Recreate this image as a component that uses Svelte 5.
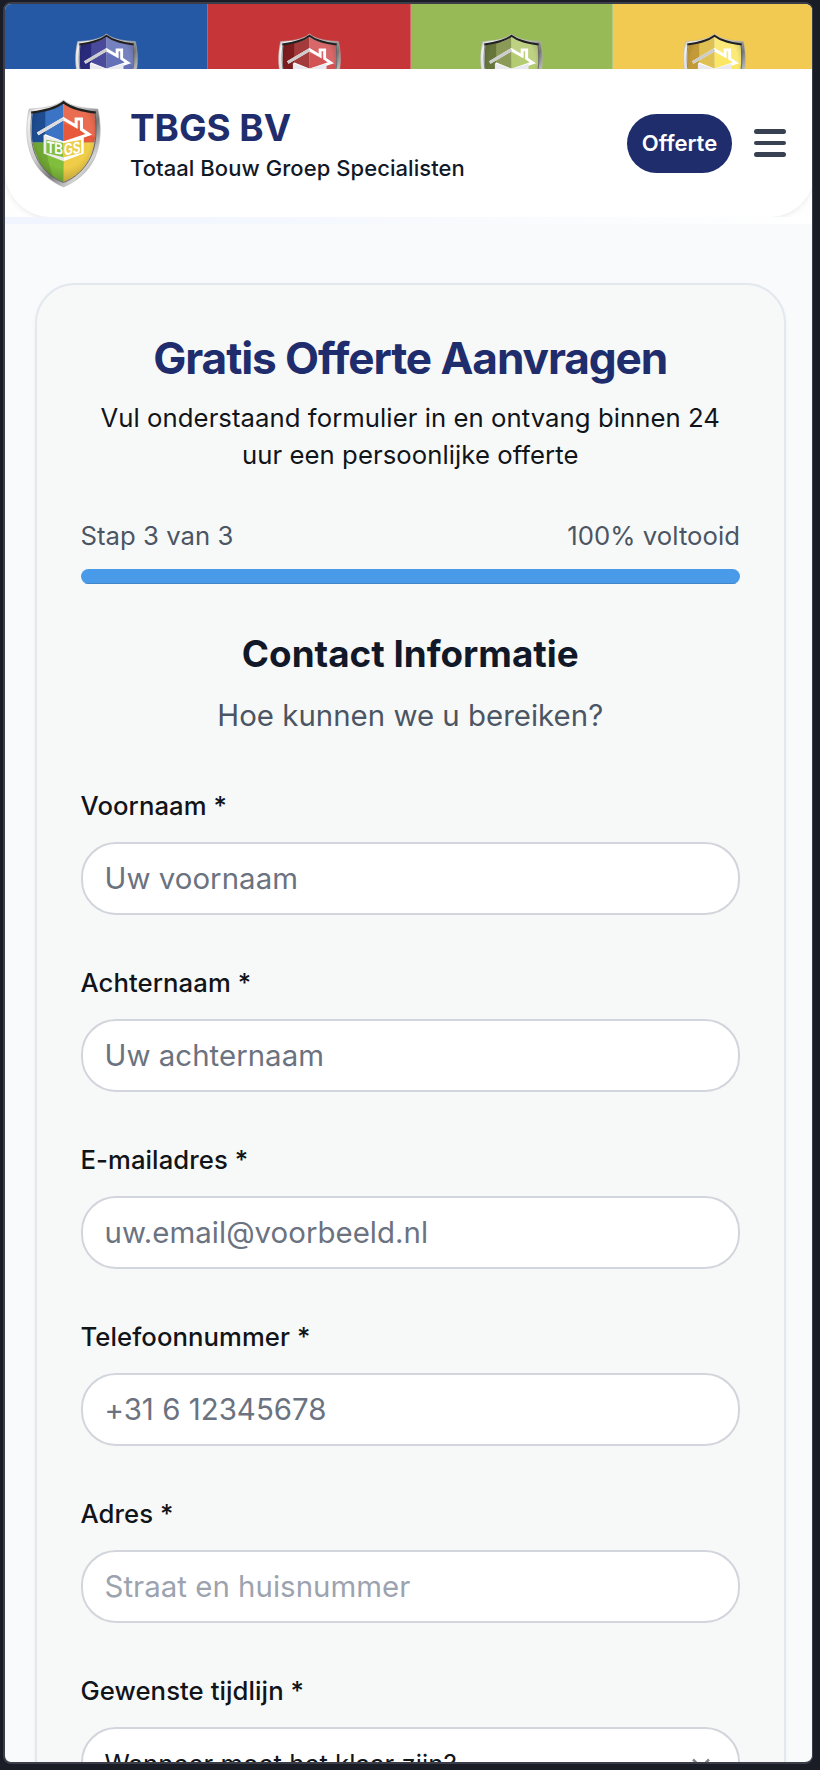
<script>
  const strips = [
    { bg: '#2558a5', dark: '#2a2a7c', mid: '#4a4a9c', light: '#6470b8' },
    { bg: '#c63639', dark: '#7d1c1e', mid: '#a33a3c', light: '#d25354' },
    { bg: '#97ba56', dark: '#66753a', mid: '#8c9a58', light: '#b5cb72' },
    { bg: '#f2ca52', dark: '#c39a38', mid: '#dfc052', light: '#fbe765' }
  ];
  const fields = [
    { label: 'Voornaam *', hint: 'Uw voornaam' },
    { label: 'Achternaam *', hint: 'Uw achternaam' },
    { label: 'E-mailadres *', hint: 'uw.email@voorbeeld.nl', type: 'email' },
    { label: 'Telefoonnummer *', hint: '+31 6 12345678', type: 'tel' },
    { label: 'Adres *', hint: 'Straat en huisnummer', pale: true }
  ];
  const outline = 'M37 1 C29 8 16 9 3 10 C0 24 -1 42 6 58 C12 72 25 82 37 87 C49 82 62 72 68 58 C75 42 74 24 71 10 C58 9 45 8 37 1Z';
  const inner = 'M37 4.5 C29 10.5 18 12 6.5 14 C5 30 5 44 10 55 C15 69 26 78 37 82 C48 78 59 69 64 55 C69 44 69 30 67.5 14 C56 12 45 10.5 37 4.5Z';
  const roof = 'M11.5 34.5 L37 19.5 L49.5 27 L49.5 19.8 H54.8 V30 L62 35 L37 43.5 L18 36';
</script>

{#snippet shield(id, tl, tlDark, tr, bl, br)}
  <defs>
    <linearGradient id="rim{id}" x1="0" y1="0" x2="1" y2="1">
      <stop offset="0" stop-color="#8b8b8b" />
      <stop offset=".12" stop-color="#f1f1f1" />
      <stop offset=".4" stop-color="#cdcdcd" />
      <stop offset=".6" stop-color="#777" />
      <stop offset=".78" stop-color="#d5d5d5" />
      <stop offset="1" stop-color="#555" />
    </linearGradient>
    <clipPath id="in{id}"><path d={inner} /></clipPath>
    <radialGradient id="sh{id}" cx=".5" cy=".4" r=".62">
      <stop offset=".6" stop-color="#000" stop-opacity="0" />
      <stop offset="1" stop-color="#000" stop-opacity=".3" />
    </radialGradient>
  </defs>
  <path d={outline} fill="url(#rim{id})" stroke="#b5b5b5" stroke-width=".6" />
  <g clip-path="url(#in{id})">
    <rect width="37" height="43" fill={tl} />
    <path d="M0 0H19V43H0Z" fill={tlDark} />
    <rect x="37" width="37" height="43" fill={tr} />
    <rect y="43" width="37" height="45" fill={bl} />
    <path d="M0 43H19Q21 65 31 88H0Z" fill="#000" opacity=".12" />
    <rect x="37" y="43" width="37" height="45" fill={br} />
    <path d="M37 4V24L50 28 68 38V8Z" fill="#fff" opacity=".12" />
    <rect width="74" height="88" fill="url(#sh{id})" />
  </g>
  <path d="M5 13.5 C18 11.5 29 9.5 37 3.2 C45 9.5 56 11.5 69 13.5" fill="none" stroke="#202020" stroke-width="2.3" />
  <path d="M5.7 14 C4 30 4.5 44 9.5 56 C15 69 26 78.5 37 82.5 C48 78.5 59 69 64.5 56 C69.5 44 70 30 68.3 14" fill="none" stroke="#555" stroke-width=".8" />
{/snippet}

<div class="screen">
  <div class="page">
    <nav class="strips">
      {#each strips as s, i}
        <div class="strip" style:background={s.bg}>
          <svg class="mini" viewBox="0 0 74 88">
            {@render shield('s' + i, s.mid, s.dark, s.light, s.mid, s.light)}
            <path d={roof} fill="none" stroke="#fff" stroke-width="3.4" />
            <path d="M11.5 34.5 L37 19.5" stroke="#ccc" stroke-width="3.4" />
            <path d="M17.5 35.5 L37 42 57 36V54L37 61.5 17.5 54Z" fill="#e9e9ef" />
          </svg>
        </div>
      {/each}
    </nav>

    <div class="header-wrap">
      <header>
        <svg class="logo" viewBox="0 0 74 88">
          {@render shield('m', '#3b74c4', '#1d4c91', '#e8583a', '#80be3b', '#f0cd48')}
          <path d={roof} fill="none" stroke="#fff" stroke-width="3" />
          <path d="M11.5 34.5 L37 19.5" stroke="#ddd" stroke-width="3" />
          <path d="M17.3 35.5 L37 42.5V61.5L17.3 54Z" fill="#ececec" />
          <path d="M37 42.5L57 36.2V54L37 61.5Z" fill="#fff" />
          <path d="M20 40.3L37 43.5V57.5L20 53.5Z" fill="#80be3b" />
          <path d="M37 43.5L54.5 40.3V53.5L37 57.5Z" fill="#e9cd4a" />
          <text x="20.6" y="50" class="mark" textLength="16" lengthAdjust="spacingAndGlyphs" transform="skewY(8)">TB</text>
          <text x="37.4" y="60.8" class="mark" textLength="16.4" lengthAdjust="spacingAndGlyphs" transform="skewY(-8)">GS</text>
        </svg>
        <div class="brand">
          <strong>TBGS BV</strong>
          <span>Totaal Bouw Groep Specialisten</span>
        </div>
        <button class="cta">Offerte</button>
        <button class="menu" aria-label="Menu"><i></i><i></i><i></i></button>
      </header>
    </div>
    <div class="band"></div>

    <main>
      <section class="card">
        <h1>Gratis Offerte Aanvragen</h1>
        <p class="lead">Vul onderstaand formulier in en ontvang binnen 24<br />uur een persoonlijke offerte</p>
        <div class="steps"><span>Stap 3 van 3</span><span>100% voltooid</span></div>
        <div class="bar"><div style:width="100%"></div></div>
        <h2>Contact Informatie</h2>
        <p class="sub">Hoe kunnen we u bereiken?</p>
        <form>
          {#each fields as f}
            <label>
              <span>{f.label}</span>
              <input class:pale={f.pale} type={f.type ?? 'text'} placeholder={f.hint} />
            </label>
          {/each}
          <label>
            <span>Gewenste tijdlijn *</span>
            <div class="select">
              <b>Wanneer moet het klaar zijn?</b>
              <svg viewBox="0 0 18 11"><path d="M1 1.5L9 9.5L17 1.5" /></svg>
            </div>
          </label>
        </form>
      </section>
    </main>
  </div>
</div>

<style>
  :global(body) { background: #1a1d26; }
  * { box-sizing: border-box; }
  .screen {
    width: 820px; height: 1770px; overflow: hidden; padding: 2px 7px 6px 3px;
    background: #1a1d26; font-family: Inter, sans-serif; color: #111418;
  }
  .page {
    height: 1762px; width: 810px; overflow: hidden;
    border: 2px solid #3b3e48; border-right-width: 1px; border-radius: 8px; background: #f9fafc;
  }
  .strips { display: grid; grid-template-columns: repeat(4, 1fr); width: 811px; height: 65.3px; overflow: hidden; }
  .strip { display: flex; justify-content: center; padding: 28.5px 0 0 1px; border-right: 1px solid #ffffff40; }
  .mini { width: 63px; height: 75px; flex: none; }
  .header-wrap, .band { width: 810px; }
  .header-wrap { background: #fefefe; }
  header {
    display: flex; align-items: center; height: 147.7px; padding: 0 24px 0 21px;
    background: #fff; border-radius: 0 0 46px 46px; box-shadow: 0 2px 5px #00000012;
  }
  .logo { width: 75px; height: 89px; flex: none; margin: 1px -1px 0 0; }
  .mark { font: 700 16.5px "Liberation Sans", sans-serif; fill: #fff; }
  .brand { display: flex; flex-direction: column; margin: 2px 0 0 30px; flex: 1; white-space: nowrap; }
  .brand strong { font-size: 36.8px; line-height: 44px; color: #1f2d6d; font-weight: 700; }
  .brand span { font-size: 22px; line-height: 29px; font-weight: 500; color: #111827; margin-top: 4px; letter-spacing: .06px; }
  button { font-family: inherit; border: 0; padding: 0; }
  .cta {
    width: 105px; height: 59px; border-radius: 30px; background: #1f2d6d; color: #fff;
    font-size: 22px; font-weight: 600;
  }
  .menu { display: flex; flex-direction: column; gap: 7px; width: 32px; margin: 0 5px 0 22px; background: none; }
  .menu i { height: 4.6px; border-radius: 3px; background: #374151; }
  .band { height: 7px; background: linear-gradient(90deg, #eff4fe, #f5f8fe 40%, #fff); }
  main { width: 810.5px; padding: 58.8px 30px 0; }
  .card {
    height: 1600px; padding: 50.5px 43.5px; border: 2px solid #e2e8ee; border-radius: 40px;
    background: #f7f9f8; box-shadow: 0 2px 4px #0000000a; text-align: center;
  }
  h1, h2, p { margin: 0; white-space: nowrap; }
  h1 { font-size: 44.2px; line-height: 46px; font-weight: 700; letter-spacing: -1.1px; color: #1f2d6d; }
  .lead { margin-top: 17.9px; font-size: 25.7px; line-height: 37px; letter-spacing: .06px; }
  .steps { display: flex; justify-content: space-between; margin-top: 44px; font-size: 25.7px; line-height: 37px; color: #4b5563; letter-spacing: .04px; }
  .bar { height: 15px; margin-top: 15px; border-radius: 8px; overflow: hidden; background: #e5e7eb; }
  .bar div { height: 100%; background: #4a9aea; border-bottom: 1px solid #4387cb; }
  h2 { margin-top: 44.3px; font-size: 36.8px; line-height: 51px; color: #111827; }
  .sub { margin-top: 15px; font-size: 29.4px; line-height: 44px; color: #4b5563; letter-spacing: .02px; }
  form { display: flex; flex-direction: column; gap: 36px; margin-top: 35.7px; text-align: left; }
  label { display: flex; flex-direction: column; height: 141px; padding-top: 13px; }
  label > span { font-size: 25.7px; line-height: 37px; font-weight: 500; letter-spacing: .07px; margin-bottom: 17.6px; white-space: nowrap; }
  input, .select {
    width: 100%; height: 73.5px; flex: none; padding: 0 22px; border: 2px solid #d3d5dc; border-radius: 35px;
    background: #fff; font: 400 29.4px Inter, sans-serif; letter-spacing: .04px;
  }
  input::placeholder { color: #6b7280; opacity: 1; }
  input.pale::placeholder { color: #9ca3af; }
  .select { display: flex; align-items: center; justify-content: space-between; padding: 0 28px 1px 22px; }
  .select b { font-size: 25.7px; font-weight: 400; }
  .select svg { width: 18px; height: 11px; }
  .select path { fill: none; stroke: #85878b; stroke-width: 2.5; }
</style>
